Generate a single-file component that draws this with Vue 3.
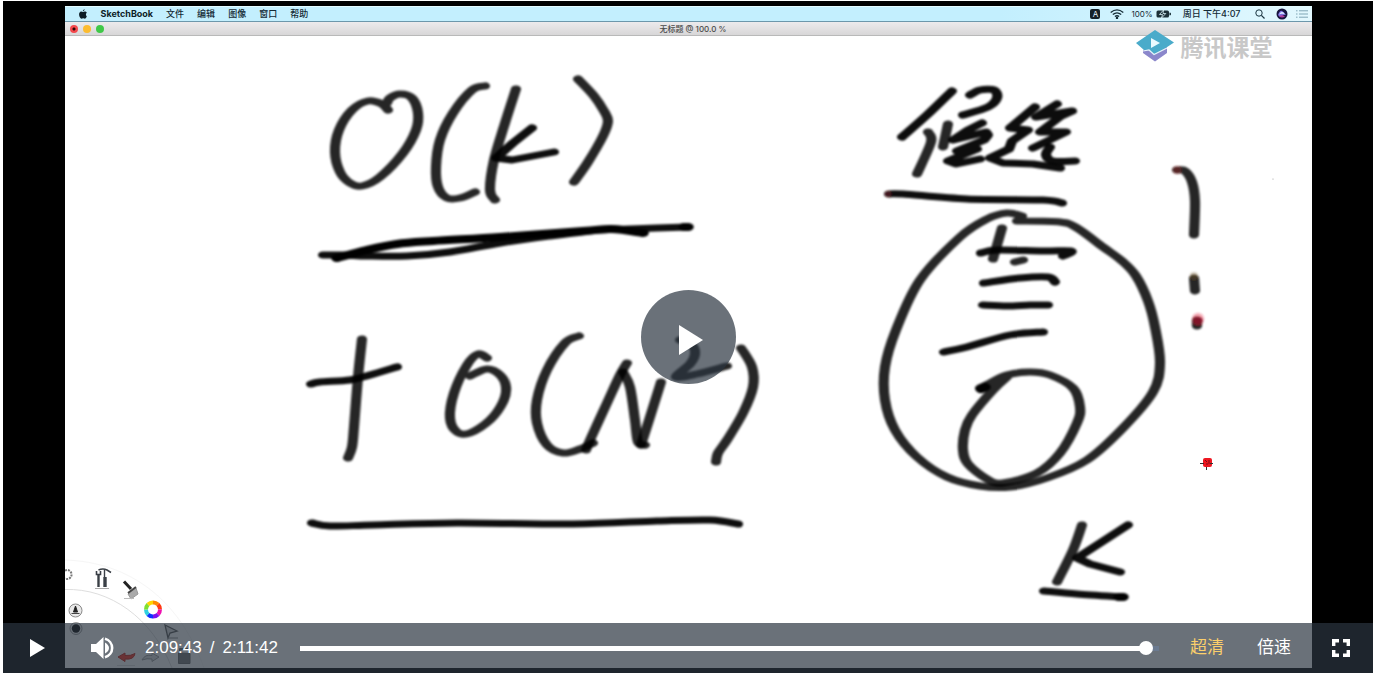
<script setup>
import { ref, computed } from 'vue'

const duration = 7902
const current = ref(7783)
const played = computed(() => (current.value / duration) * 100 + '%')
const clock = (s) =>
  Math.floor(s / 3600) + ':' + String(Math.floor(s / 60) % 60).padStart(2, '0') + ':' + String(s % 60).padStart(2, '0')

const menus = ['文件', '编辑', '图像', '窗口', '帮助']

// The brush is wider than it is tall: strokes are laid out in a narrowed space and widened by the group.
const BRUSH = 1.45

const round = (n) => Math.round(n * 100) / 100

function smooth(points) {
  const p = points.map(([x, y]) => [x / BRUSH, y])
  let d = `M${round(p[0][0])} ${p[0][1]}`
  for (let i = 0; i < p.length - 1; i++) {
    const a = p[i - 1] || p[i]
    const b = p[i]
    const c = p[i + 1]
    const e = p[i + 2] || c
    d += `C${round(b[0] + (c[0] - a[0]) / 6)} ${round(b[1] + (c[1] - a[1]) / 6)} ${round(c[0] - (e[0] - b[0]) / 6)} ${round(c[1] - (e[1] - b[1]) / 6)} ${round(c[0])} ${c[1]}`
  }
  return d
}

function sharp(points) {
  return 'M' + points.map(([x, y]) => `${round(x / BRUSH)} ${y}`).join('L')
}

const soft = [
  [[388,110],[382,104],[368,101],[352,110],[339,130],[335,152],[340,172],[350,183],[362,186],[380,177],[403,153],[416,130],[418,113],[412,98],[400,94],[390,98],[387,103]],
  [[485,86],[472,90],[453,113],[440,140],[436,167],[438,187],[447,198],[460,198],[475,192]],
  [[516,89],[505,123],[494,160],[490,190],[495,200]],
  [[578,79],[594,96],[604,111],[608,121],[603,136],[588,162],[574,182]],
  [[362,339],[358,377],[354,427],[352,447],[348,458]],
  [[487,358],[478,354],[467,365],[454,393],[450,418],[457,432],[470,433],[490,420],[503,402],[506,387],[500,375],[487,369],[470,376]],
  [[579,336],[565,343],[547,370],[537,400],[537,423],[547,445],[563,453],[580,449],[593,443]],
  [[586,450],[590,440],[607,403],[620,375],[627,363]],
  [[623,372],[630,387],[635,420],[638,442],[645,445]],
  [[641,445],[650,417],[661,382]],
  [[680,340],[692,345],[695,354],[690,364],[676,377],[697,374],[727,366]],
  [[741,348],[752,367],[753,387],[743,413],[727,440],[718,453],[716,462]],
  [[928,132],[931,142],[917,174]],
  [[948,124],[943,147]],
  [[1022,216],[1007,213],[987,219],[960,237],[920,280],[896,330],[885,367],[885,400],[895,430],[917,457],[947,477],[980,486],[1010,487],[1047,478],[1087,460],[1123,428],[1153,392],[1160,363],[1155,327],[1148,301],[1136,276],[1122,261],[1103,247],[1077,228],[1060,222],[1017,221]],
  [[1002,228],[993,259]],
  [[1015,262],[1023,260]],
  [[980,388],[988,384],[1007,375],[1030,372],[1050,375],[1073,388],[1080,407],[1077,423],[1060,453],[1037,473],[1003,483],[987,479],[968,464],[963,450],[965,430],[972,415],[993,390],[1007,377]],
  [[1082,525],[1073,550],[1057,582]],
  [[1177,170],[1185,171],[1192,182],[1195,201],[1194,235]],
  [[1194,278],[1195,291]],
  [[1197,320],[1197,326]]
]

const firm = [
  [[323,255],[345,255],[367,256],[407,256],[450,252],[500,243],[550,236],[600,230],[630,229],[688,227]],
  [[311,384],[320,382],[350,380],[370,375],[397,367]],
  [[312,523],[330,526],[373,525],[457,523],[573,524],[657,521],[710,520],[738,524]],
  [[952,91],[927,115],[902,137]],
  [[970,95],[980,90],[994,90],[997,98],[988,107],[963,115]],
  [[1050,147],[1046,155],[1053,161],[1075,161]],
  [[889,194],[903,194],[967,199],[1043,200],[1062,203]],
  [[981,253],[997,250],[1043,251],[1071,251],[1063,256]],
  [[984,283],[1020,278],[1048,277],[1055,282]],
  [[983,305],[1007,306],[1030,305],[1048,305]],
  [[944,352],[967,347],[1010,335],[1043,332]],
  [[1044,591],[1077,594],[1123,597]]
]

const bold = [
  [[337,258],[367,250],[397,244],[433,241],[500,237],[583,231],[612,229],[643,233]],
  [[684,227],[688,227]],
  [[1119,597],[1123,597]],
  [[981,389],[985,387]]
]

const angular = [
  [[532,128],[513,143],[496,158],[512,160],[533,156],[554,152]],
  [[982,123],[968,130],[953,140],[986,132],[988,135],[984,140],[957,151],[977,149],[948,161],[956,164],[980,159]],
  [[1035,107],[1010,128],[1028,130],[1012,141],[1009,149],[990,158],[1003,163],[1033,164],[1060,168]],
  [[1057,104],[1036,117],[1072,111],[1061,116],[1040,132],[1066,132],[1033,148]],
  [[1128,525],[1077,558],[1090,564],[1120,572]]
]
</script>

<template>
  <main class="player">
    <section class="screen" aria-label="视频画面">
      <header class="menubar">
        <svg class="apple" viewBox="0 0 10 12" aria-hidden="true">
          <path d="M7 0.3C6.9 1.6 6 2.6 4.8 2.7 4.8 1.5 5.8 .5 7 .3ZM8.5 6.3C8.5 5 9.6 4.4 9.6 4.4 8.9 3.4 8 3.1 7.3 3.1 6.3 3 5.6 3.6 5 3.6S3.700 3.100 2.900 3.100C1.200 3.200 .3 4.700 .3 6.700.3 9 1.800 11.700 3.100 11.700 3.800 11.700 4.200 11.200 5.100 11.200S6.300 11.700 7 11.700C8.300 11.700 9.300 9.800 9.600 8.700 9.500 8.700 8.500 8 8.500 6.300Z" fill="#0c1c26" />
        </svg>
        <b class="app">SketchBook</b>
        <span v-for="m in menus" :key="m" class="menu">{{ m }}</span>
        <span class="status">
          <span class="ime">A</span>
          <svg class="wifi" viewBox="0 0 14 10" fill="none" stroke="#142b36" stroke-width="1.300" aria-hidden="true">
            <path d="M.7 3.500Q7-1.800 13.300 3.500M2.800 5.600Q7 2.200 11.200 5.600M4.900 7.500Q7 6 9.100 7.500" />
            <circle cx="7" cy="9" r=".6" fill="#142b36" />
          </svg>
          <span class="percent">100%</span>
          <svg class="battery" viewBox="0 0 15 8" aria-hidden="true">
            <rect x=".5" y=".5" width="12.500" height="7" rx="1.500" fill="#1b3039" />
            <path d="M14 2.800q1 1.200 0 2.400z" fill="#1b3039" stroke="#1b3039" />
            <path d="M7.500 0L3.500 4.500H6.500L5.500 8 9.800 3.500H7Z" fill="#1b3039" stroke="#def6fd" stroke-width=".8" />
          </svg>
          <span class="date">周日 下午4:07</span>
          <svg class="search" viewBox="0 0 10 10" fill="none" stroke="#1a3440" aria-hidden="true">
            <circle cx="4" cy="4" r="3.200" /><path d="M6.400 6.400L9.500 9.500" stroke-width="1.200" />
          </svg>
          <svg class="siri" viewBox="0 0 12 12" aria-hidden="true">
            <circle cx="6" cy="6" r="5.500" fill="#17153f" />
            <path d="M2 7Q4 2 6 3T10 7Q8 6 6 8T2 7Z" fill="#7c6fe0" />
            <path d="M3 6.500Q6 1 9 6.500Q6 5 3 6.500Z" fill="#d6e6ff" />
            <path d="M3 8.500Q6 6 9 8.500Q6 10.500 3 8.500Z" fill="#b33c9c" />
          </svg>
          <svg class="list" viewBox="0 0 12 8" stroke="#7fa6b5" aria-hidden="true">
            <path d="M0 .8H1.500M3 .8H12M0 4H1.500M3 4H12M0 7.200H1.500M3 7.200H12" />
          </svg>
        </span>
      </header>

      <div class="titlebar">
        <span class="lights"><i class="close"></i><i class="min"></i><i class="max"></i></span>
        <span class="title">无标题 @ 100.0 %</span>
      </div>

      <svg class="canvas" viewBox="65 36 1247 632" role="img" aria-label="手写板书：O(k) + O(N²)，候选，K">
        <defs>
          <filter id="brush" filterUnits="userSpaceOnUse" x="65" y="36" width="1247" height="632">
            <feGaussianBlur stdDeviation=".8" />
          </filter>
        </defs>
        <g filter="url(#brush)">
          <g :transform="`scale(${BRUSH} 1)`" class="strokes">
            <path v-for="(s, i) in soft" :key="'s' + i" :d="smooth(s)" class="soft" />
            <path v-for="(s, i) in firm" :key="'f' + i" :d="smooth(s)" class="firm" />
            <path v-for="(s, i) in angular" :key="'a' + i" :d="sharp(s)" class="firm" />
            <path v-for="(s, i) in bold" :key="'b' + i" :d="smooth(s)" class="bold" />
          </g>
          <circle cx="888" cy="194" r="3" fill="#b0303a" opacity=".35" />
          <circle cx="1177" cy="170" r="4" fill="#a02028" opacity=".4" />
          <circle cx="1198" cy="319" r="6" fill="#e0203c" opacity=".4" />
          <ellipse cx="1198" cy="321" rx="5" ry="4" fill="#8a1024" opacity=".65" />
          <circle cx="1194" cy="276" r="4" fill="#7a6030" opacity=".35" />
        </g>
        <circle cx="1273" cy="179" r=".6" fill="#999" />
        <g fill="none">
          <rect x="1203" y="458" width="9" height="9" rx="2" fill="#ee1620" />
          <path d="M1200 463.500H1204M1210 463.500H1213M1206.500 467V470" stroke="#333" />
          <path d="M1205 460L1207 462M1209 460V464M1206 464H1208" stroke="#7a1015" />
        </g>

        <!-- Radial tool palette in the lower left corner -->
        <g fill="none">
          <path d="M65 589.500C110 588 152 618 172 668" stroke="#dedede" />
          <path d="M65 560C130 562 180 600 204 668" stroke="#f6f6f6" />
          <path d="M65 570.500A4.500 4.500 0 1 1 65 578.500" stroke="#777" stroke-width="2" stroke-dasharray="2 1" />
          <g stroke="#3a3f46">
            <path d="M98.500 574V587" stroke-width="2.400" />
            <path d="M96.500 571V574.500H100.500V571" stroke-width="1.600" />
            <path d="M104.500 570V577" stroke-width="1.400" />
            <path d="M105 577V587" stroke-width="3.400" />
            <path d="M98.500 570Q103 568 107 570L111 572.500" stroke-width="1.500" />
            <path d="M95 588.500H109" stroke="#aaa" />
          </g>
          <path d="M124 581.500L131 589" stroke="#222" stroke-width="3" />
          <path d="M128 594L136 588 138 594 131 599Z" fill="#aaa" stroke="#999" />
          <path d="M128 593L136 587" stroke="#444" stroke-width="2" />
          <path d="M124 598.500H134" stroke="#bbb" />
          <circle cx="75.500" cy="610.500" r="6.500" fill="#e8e8e8" stroke="#8a8a8a" />
          <path d="M75.500 606L73.500 612H77.500Z" fill="#222" stroke="#222" />
          <path d="M71.500 613.500H79.500" stroke="#444" />
          <circle cx="76" cy="628.500" r="6" fill="#f2f2f2" stroke="#999" />
          <circle cx="76" cy="628.500" r="4.200" fill="#000" />
          <g stroke-width="4">
            <path d="M153 602.500A7 7 0 0 1 158 604.500" stroke="#ff8a00" />
            <path d="M158 604.500A7 7 0 0 1 160 609.500" stroke="#ff3b10" />
            <path d="M160 609.500A7 7 0 0 1 158 614.500" stroke="#ee10b0" />
            <path d="M158 614.500A7 7 0 0 1 153 616.500" stroke="#7a10f0" />
            <path d="M153 616.500A7 7 0 0 1 148 614.500" stroke="#1030ff" />
            <path d="M148 614.500A7 7 0 0 1 146 609.500" stroke="#30d0e0" />
            <path d="M146 609.500A7 7 0 0 1 148 604.500" stroke="#80e030" />
            <path d="M148 604.500A7 7 0 0 1 153 602.500" stroke="#ffd500" />
          </g>
          <path d="M165 625L177 631 170 633 168 638Z" fill="#ddd" stroke="#555" stroke-width="1.300" />
          <path d="M168 638H178" stroke="#888" />
          <path d="M118 657L125 653V655.500Q131 656 135 653.500 134 660 125 659V661.500Z" fill="#ff3020" stroke="#c81c10" />
          <path d="M159 657L152 653V655.500Q145 654 142 660 147 658 152 659V661.500Z" fill="#ddd" stroke="#999" />
          <path d="M178.500 653V663.500H190V653.500ZM179.500 651V648.500H188" fill="#777" stroke="#666" />
          <path d="M117 665.500H135" stroke="#ddd" />
        </g>
      </svg>

      <div class="watermark">
        <svg viewBox="0 0 38 32" aria-hidden="true">
          <path d="M7 20L13 18 19 23 31 16V23L19 31.500 7 23Z" fill="#8b87cb" />
          <path d="M19 0L38 12.500 22 23 18 24.500 13 20.500 8 20 0 13Z" fill="#4aabca" />
          <path d="M7 21L13 20 18 24.500 31 18" fill="none" stroke="#e8f2fa" stroke-width="1.200" />
          <path d="M15 8L24 13 15 18Z" fill="#eafaff" />
        </svg>
        <span>腾讯课堂</span>
      </div>
    </section>

    <button class="big-play" type="button" aria-label="播放">
      <svg viewBox="0 0 24 30" aria-hidden="true"><path d="M0 0L24 15 0 30Z" fill="#fff" /></svg>
    </button>

    <div class="controls">
      <button class="play" type="button" aria-label="播放">
        <svg viewBox="0 0 15 18" aria-hidden="true"><path d="M0 0L15 9 0 18Z" fill="#fff" /></svg>
      </button>
      <button class="volume" type="button" aria-label="音量">
        <svg viewBox="0 0 24 22" aria-hidden="true">
          <path d="M0 7H5L12.500 0V22L5 15H0Z" fill="#fff" />
          <path d="M14 5.500Q18 8 18 11T14 16.500Z" fill="#fff" />
          <path d="M14 1.800A9.500 9.500 0 0 1 14 20.200" fill="none" stroke="#fff" stroke-width="2.600" />
        </svg>
      </button>
      <div class="time"><span>{{ clock(current) }}</span><span>/</span><span>{{ clock(duration) }}</span></div>
      <div class="seek">
        <div class="rail"><div class="played" :style="{ width: played }"></div></div>
        <input v-model.number="current" type="range" min="0" :max="duration" aria-label="播放进度" />
      </div>
      <button class="quality" type="button">超清</button>
      <button class="speed" type="button">倍速</button>
      <button class="full" type="button" aria-label="全屏">
        <svg viewBox="0 0 18 18" fill="none" stroke="#fff" stroke-width="3.400" aria-hidden="true">
          <path d="M1.700 7V1.700H7M11 1.700H16.300V7M16.300 11V16.300H11M7 16.300H1.700V11" />
        </svg>
      </button>
    </div>
  </main>
</template>

<style>
body {
  margin: 0;
  background: #fff;
}
</style>

<style scoped>
.player {
  position: relative;
  box-sizing: border-box;
  height: calc(100vh - 1px);
  margin: 1px 0 0 3px;
  padding: 5px 0;
  display: flex;
  justify-content: center;
  background: #000;
  overflow: hidden;
  font-family: "Liberation Sans", "Noto Sans CJK SC", sans-serif;
}

.screen {
  position: relative;
  height: 100%;
  aspect-ratio: 1247 / 662;
  display: flex;
  flex-direction: column;
  background: #fff;
  overflow: hidden;
}

.menubar {
  flex: none;
  box-sizing: border-box;
  height: 16px;
  padding: 0 4px 0 13px;
  border-top: 1px solid #e4fbff;
  border-bottom: 1px solid #6d97ab;
  display: flex;
  align-items: center;
  background: linear-gradient(90deg, #c3effe 75%, #e2f8fe);
  color: #142b36;
  font: 9px/14px Inter, "Noto Sans CJK SC", sans-serif;
  white-space: nowrap;
}
.apple { width: 10px; height: 10px; margin-right: 13px; }
.app { color: #0c1c26; }
.menu { margin-left: 13px; font-weight: 500; }
.status { margin-left: auto; display: flex; align-items: center; }
.ime {
  width: 10px;
  height: 10px;
  border-radius: 2px;
  background: #142128;
  color: #e6f8fd;
  font-size: 8px;
  line-height: 10px;
  text-align: center;
}
.wifi { width: 14px; height: 10px; margin-left: 10px; }
.percent { margin-left: 7px; font-size: 8px; }
.battery { width: 15px; height: 8px; margin-left: 3px; }
.date { margin-left: 12px; font-weight: 500; }
.search { width: 10px; height: 10px; margin-left: 14px; }
.siri { width: 12px; height: 12px; margin-left: 11px; }
.list { width: 12px; height: 8px; margin-left: 8px; }

.titlebar {
  flex: none;
  box-sizing: border-box;
  height: 14px;
  border-bottom: 1px solid #b9b9b9;
  padding: 0 5px;
  display: grid;
  grid-template-columns: 1fr auto 1fr;
  align-items: center;
  background: linear-gradient(#eceaec, #d8d7d8);
}
.lights { display: flex; gap: 5px; }
.lights i { width: 8px; height: 8px; border-radius: 50%; }
.close { background: radial-gradient(circle, #2a0505 1px, #f4484c 2px); }
.min { background: #fcbc30; }
.max { background: #3fc848; }
.title { padding-left: 10px; color: #4a4a4a; font: 500 8px/12px Inter, "Noto Sans CJK SC", sans-serif; }

.canvas { flex: 1; min-height: 0; width: 100%; display: block; }
.strokes path { fill: none; stroke: #000; stroke-linecap: round; stroke-linejoin: round; stroke-width: 7px; }
.strokes .soft { stroke-opacity: 0.85; }
.strokes .firm { stroke-opacity: 0.95; }
.strokes .bold { stroke-width: 8px; }

.watermark {
  position: absolute;
  top: 24px;
  right: 39px;
  display: flex;
  align-items: center;
  gap: 7px;
  color: #c8c8c8;
  font: 700 23px/32px "Noto Sans CJK SC", sans-serif;
}
.watermark svg { width: 38px; height: 32px; }

button {
  border: 0;
  padding: 0;
  background: none;
  display: flex;
  align-items: center;
  justify-content: center;
  color: #fff;
  font: inherit;
  cursor: pointer;
}

.big-play {
  position: absolute;
  top: 50%;
  left: 50%;
  width: 95px;
  height: 94px;
  margin: -47px 0 0 -47px;
  border-radius: 50%;
  background: rgba(43, 53, 64, 0.7);
}
.big-play svg { width: 24px; height: 30px; margin: 6px 0 0 4px; }

.controls {
  position: absolute;
  left: 0;
  right: 0;
  bottom: 0;
  height: 50px;
  display: flex;
  align-items: stretch;
  background: rgba(43, 53, 64, 0.7);
  color: #fff;
  font-size: 17px;
  line-height: 50px;
}
.play { width: 68px; }
.play svg { width: 15px; height: 18px; }
.volume { width: 64px; }
.volume svg { width: 24px; height: 22px; }
.time { display: flex; gap: 8px; margin: 0 22px 0 10px; white-space: nowrap; }
.seek { flex: 1; min-width: 0; display: grid; align-items: center; margin-right: 16px; }
.rail, .seek input { grid-area: 1 / 1; }
.rail { height: 5px; background: #6b7a90; }
.played { height: 5px; background: #fff; }
.seek input {
  appearance: none;
  height: 14px;
  margin: 0 -7px;
  background: transparent;
  cursor: pointer;
}
.seek input::-webkit-slider-thumb {
  appearance: none;
  width: 14px;
  height: 14px;
  border-radius: 50%;
  background: #fff;
}
.quality { width: 64px; color: #fbcf6b; }
.speed { width: 70px; }
.full { width: 64px; }
.full svg { width: 18px; height: 18px; }
</style>
